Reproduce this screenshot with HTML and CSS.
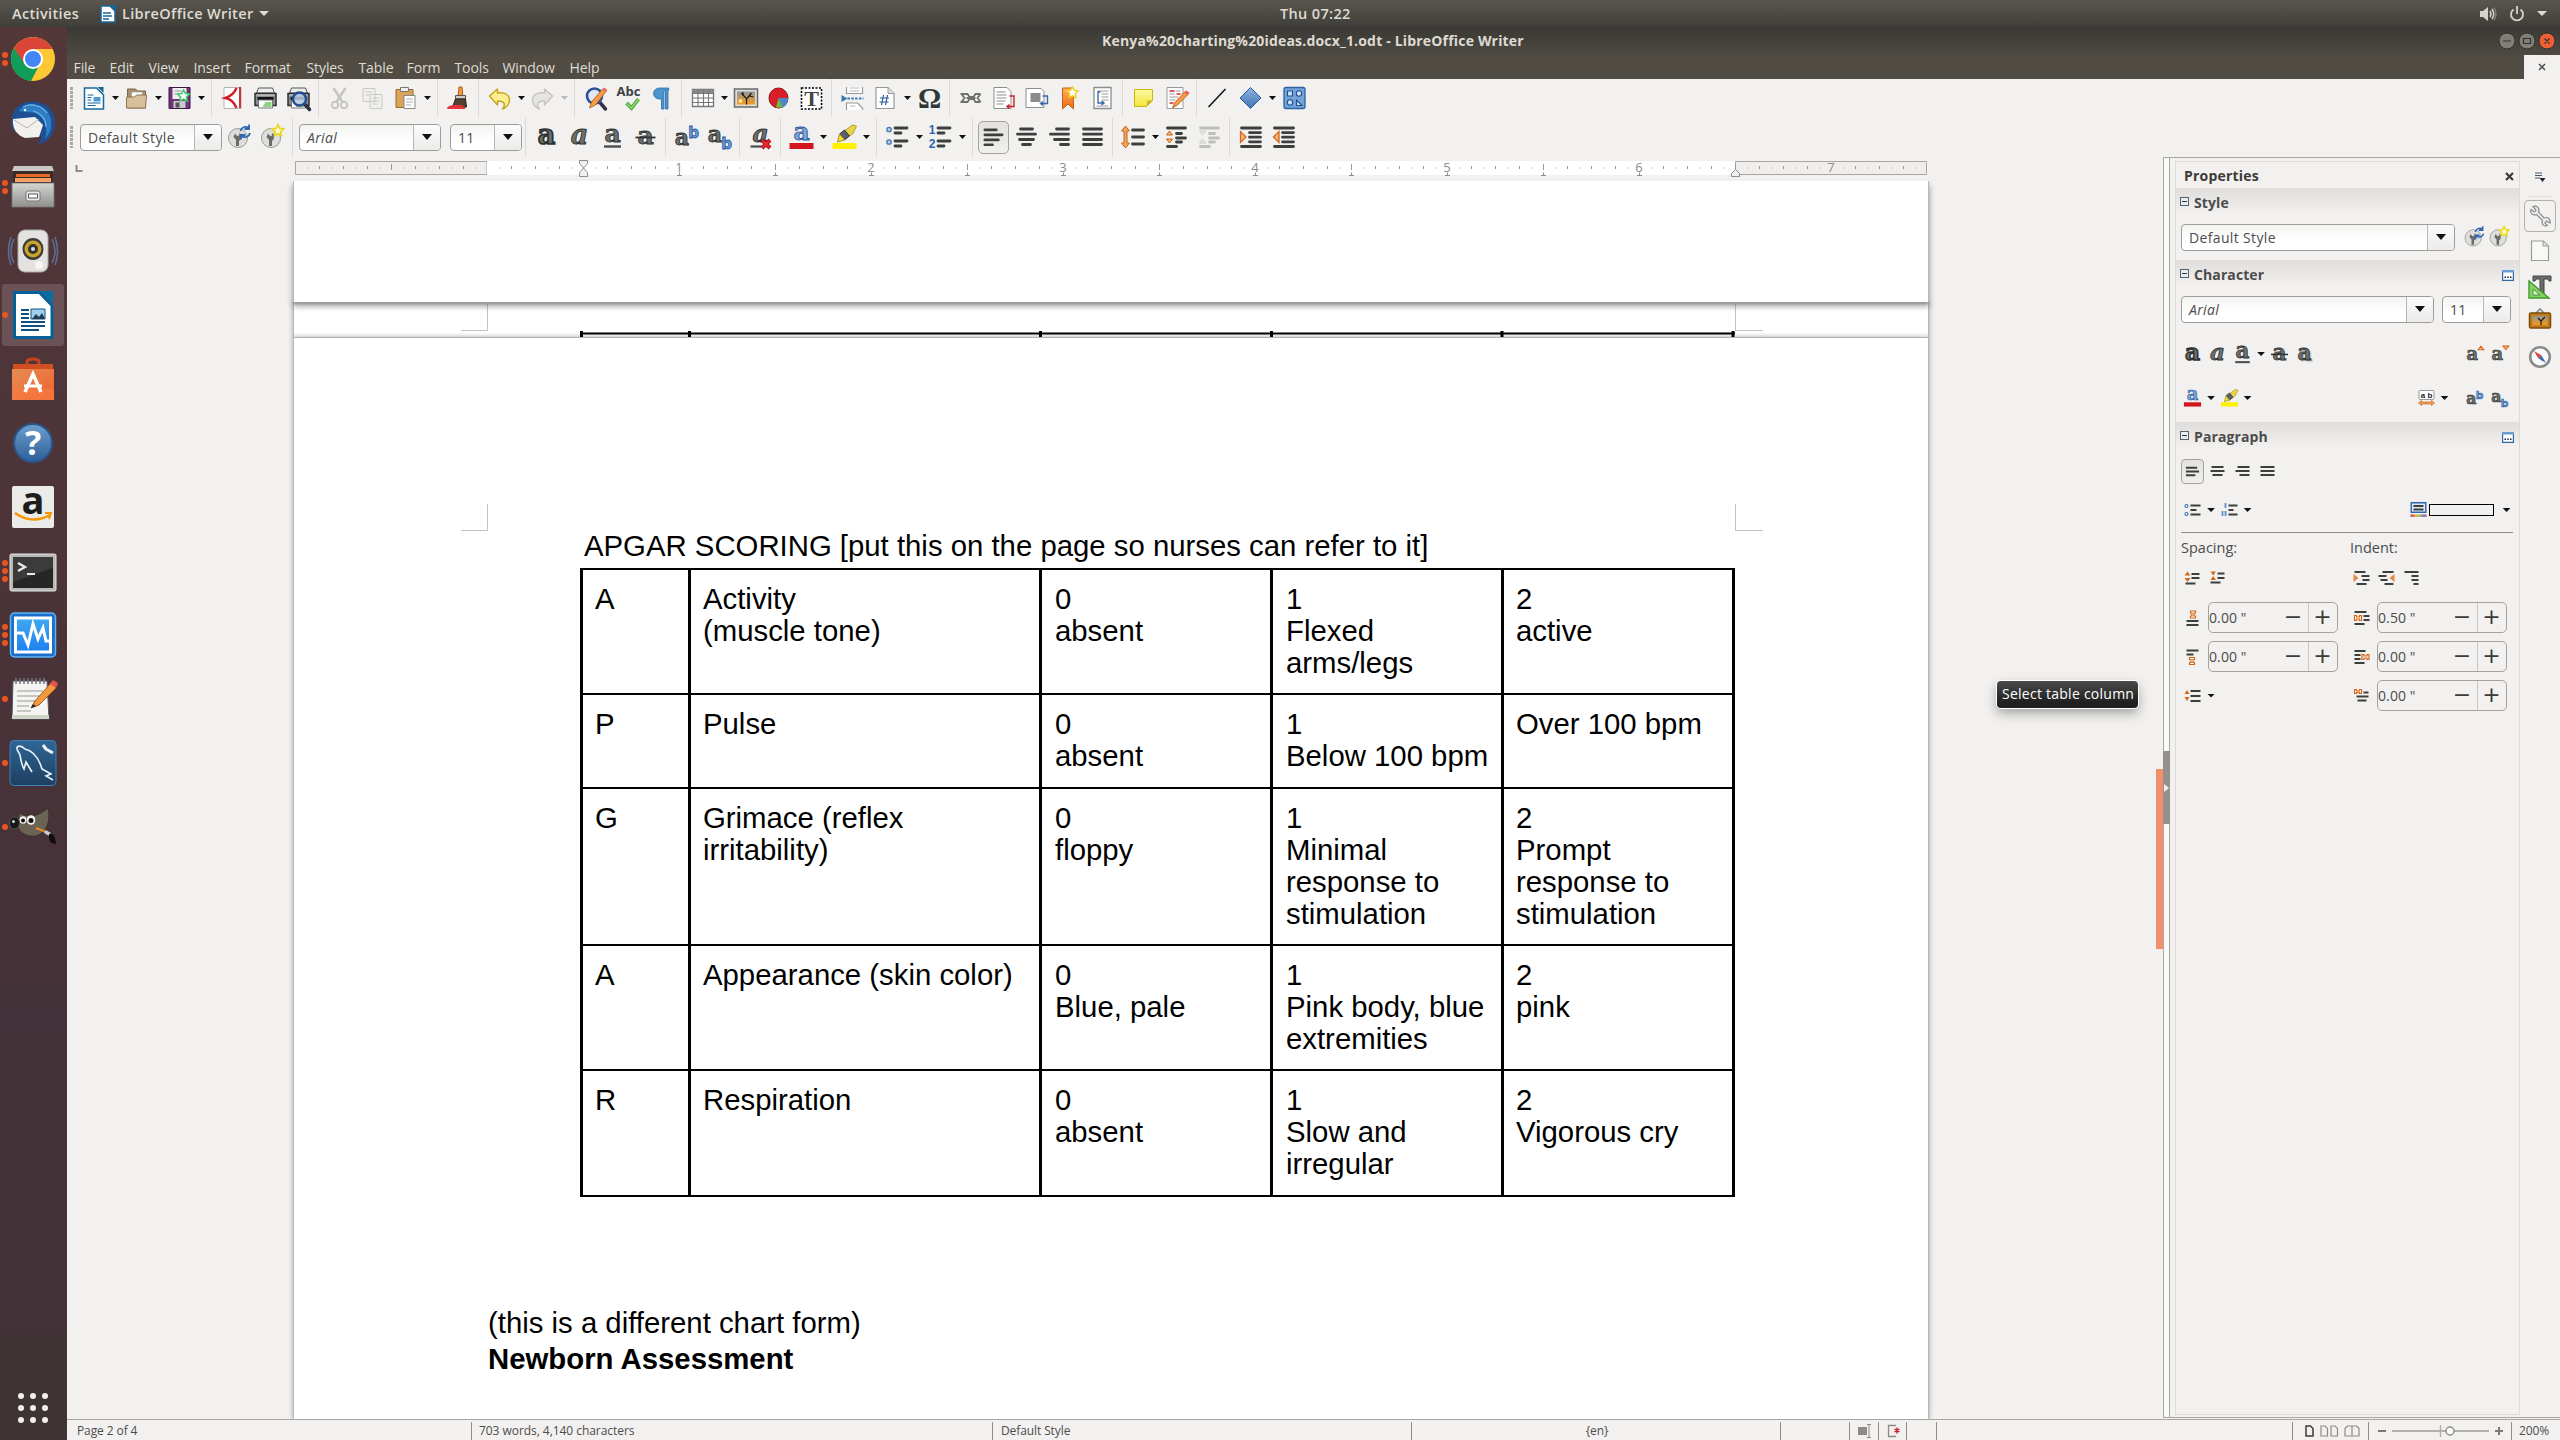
FILE: index.html
```html
<!DOCTYPE html>
<html lang="en">
<head>
<meta charset="utf-8">
<title>Kenya%20charting%20ideas.docx_1.odt - LibreOffice Writer</title>
<link rel="stylesheet" href="styles.css">
</head>
<body>
<svg class="paints" width="0" height="0" aria-hidden="true">
  <defs>
    <linearGradient id="gBlue" x1="0" y1="0" x2="0" y2="1"><stop offset="0" stop-color="#8db5e2"/><stop offset="1" stop-color="#3f74b5"/></linearGradient>
    <linearGradient id="gYel" x1="0" y1="0" x2="0" y2="1"><stop offset="0" stop-color="#fdf8a0"/><stop offset="1" stop-color="#f2e63c"/></linearGradient>
    <linearGradient id="gOr" x1="0" y1="0" x2="0" y2="1"><stop offset="0" stop-color="#ffb060"/><stop offset="1" stop-color="#e96a10"/></linearGradient>
    <linearGradient id="gGrey" x1="0" y1="0" x2="0" y2="1"><stop offset="0" stop-color="#d5d5d3"/><stop offset="1" stop-color="#8f8f8d"/></linearGradient>
    <linearGradient id="gSun" x1="0" y1="0" x2="0" y2="1"><stop offset="0" stop-color="#8d98a0"/><stop offset="1" stop-color="#f59a1c"/></linearGradient>
    <linearGradient id="gHelp" x1="0" y1="0" x2="0" y2="1"><stop offset="0" stop-color="#6f9fce"/><stop offset="1" stop-color="#2c5f99"/></linearGradient>
    <linearGradient id="gBag" x1="0" y1="0" x2="1" y2="1"><stop offset="0" stop-color="#e58d55"/><stop offset="1" stop-color="#f0622d"/></linearGradient>
    <linearGradient id="gMon" x1="0" y1="0" x2="0" y2="1"><stop offset="0" stop-color="#3fa9f0"/><stop offset="1" stop-color="#1f7ff0"/></linearGradient>
    <linearGradient id="gSql" x1="0" y1="0" x2="0" y2="1"><stop offset="0" stop-color="#2f6695"/><stop offset="1" stop-color="#1d3f60"/></linearGradient>
    <pattern id="ticks" x="295" y="157" width="192" height="24" patternUnits="userSpaceOnUse">
      <path fill="#9a9896" d="M12 10.500h1v1h-1zM36 10.500h1v1h-1zM60 10.500h1v1h-1zM84 10.500h1v1h-1zM108 10.500h1v1h-1zM132 10.500h1v1h-1zM156 10.500h1v1h-1zM180 10.500h1v1h-1zM24 9h1v3h-1zM48 9h1v3h-1zM72 9h1v3h-1zM120 9h1v3h-1zM144 9h1v3h-1zM168 9h1v3h-1zM96 7h1v6h-1z"/>
    </pattern>
  </defs>
</svg>
<svg class="sprite" aria-hidden="true">
  <symbol id="new" viewBox="0 0 28 28"><path d="M5 4h12l7 7v14H5z" fill="#fff" stroke="#17679c" stroke-width="1.500"/><path d="M18 3h6v6z" fill="#17679c"/><path d="M8 11h6M8 13.500h4M8 16h4M8 19h13M8 21.500h8" stroke="#17679c" stroke-width="1.200"/><path d="M14 13h7v4.500h-7z" fill="#4a9ad4"/></symbol>
  <symbol id="open" viewBox="0 0 28 28"><path d="M5 5h8l2 2h8v17H5z" fill="#a98f6c" stroke="#7b6548"/><path d="M9 8h11v8H9z" fill="#fff" stroke="#999" stroke-width=".7"/><path d="M4 13h8l2-2h10l-1 13H4z" fill="#d9c09a" stroke="#8d7452"/></symbol>
  <symbol id="save" viewBox="0 0 28 28"><path d="M3.500 3.500h21v21h-21z" fill="#72347c" stroke="#3f1747"/><path d="M7 4h14v11H7z" fill="#eee"/><path d="M9 7h7M9 10h6" stroke="#999"/><path d="M8 17h12v7H8z" fill="#c9c9c9"/><path d="M10 18.500h4v5h-4z" fill="#555"/><path d="M18 6l2 3.500 4 .6-3 2.800.8 4.100-3.800-1.800-3.600 1.800.7-4.100-3-2.800 4.100-.6z" fill="#fff" stroke="#3ec96a" stroke-width="1.500"/></symbol>
  <symbol id="pdf" viewBox="0 0 28 28"><path d="M5.500 3.500h17v21h-17z" fill="#fff" stroke="#b5b5b3"/><path d="M18 4c-2 5-5 8-11 10 5 1 9 5 11 10" fill="none" stroke="#d01c22" stroke-width="2.400"/><path d="M21.500 3v21" stroke="#d01c22" stroke-width="1.800"/></symbol>
  <symbol id="print" viewBox="0 0 28 28"><path d="M7 4h14l2 5H5z" fill="#eee" stroke="#555"/><path d="M3.500 9.500h21v12h-21z" fill="#8b8e90" stroke="#2b2d2e" stroke-width="1.500"/><path d="M6 13h16v3H6z" fill="#111"/><path d="M7 16h14v8H7z" fill="#fff" stroke="#777"/><path d="M14 18h6v5h-9z" fill="#8ed37e"/><path d="M5 11h18" stroke="#ddd"/></symbol>
  <symbol id="lens" viewBox="0 0 28 28"><path d="M20 20l5 5.500" stroke="#2a3340" stroke-width="3.500" stroke-linecap="round"/><circle cx="15" cy="15" r="6.500" fill="#b7cbe6" fill-opacity=".85" stroke="#274a94" stroke-width="2.400"/></symbol>
  <symbol id="preview" viewBox="0 0 28 28"><use href="#print"/><use href="#lens"/></symbol>
  <symbol id="cut" viewBox="0 0 28 28"><g fill="none" stroke="#c6c5c3" stroke-width="2"><path d="M8 4l9 14M20 4l-9 14" stroke-width="2.500"/><circle cx="9.500" cy="21" r="3.200"/><circle cx="18.500" cy="21" r="3.200"/></g></symbol>
  <symbol id="copy" viewBox="0 0 28 28"><g fill="#f0efed" stroke="#cbcac8"><path d="M4.500 4.500h12v13h-12zM11.500 10.500h12v14h-12z"/><path d="M7 8h7M7 11h4M14 14h7M14 17h7M14 20h5"/></g></symbol>
  <symbol id="paste" viewBox="0 0 28 28"><path d="M4.500 5.500h17v18h-17z" fill="#d9a45a" stroke="#9b6a2a"/><path d="M9 3.500h8v4H9z" fill="#eee" stroke="#777"/><path d="M12.500 11.500h11v13h-11z" fill="#fff" stroke="#888"/><path d="M14.500 15h7M14.500 18h7M14.500 21h5" stroke="#aaa"/></symbol>
  <symbol id="brush" viewBox="0 0 28 28"><path d="M14.500 3h3l.8 9h-4.600z" fill="#f39a3d" stroke="#b35c11"/><path d="M11 11.500h10v3.500H11z" fill="#cfcfcd" stroke="#555"/><path d="M11 15h10l1 8H8z" fill="#55402f" stroke="#2c1d14"/><path d="M2 24c4-4 9-3 16-3l3 4H4z" fill="#e0303a"/></symbol>
  <symbol id="undo" viewBox="0 0 28 28"><path d="M4 12l8-7v4c8-1 12 2 12 7 0 4-2 7-7 9 3-4 3-8-5-8v4z" fill="#fcee8e" stroke="#c9a31a" stroke-width="1.400" stroke-linejoin="round"/></symbol>
  <symbol id="redo" viewBox="0 0 28 28"><path d="M24 12l-8-7v4c-8-1-12 2-12 7 0 4 2 7 7 9-3-4-3-8 5-8v4z" fill="#e6e5e3" stroke="#c5c4c2" stroke-width="1.400" stroke-linejoin="round"/></symbol>
  <symbol id="find" viewBox="0 0 28 28"><path d="M18 18l6 7" stroke="#334" stroke-width="3.500" stroke-linecap="round"/><circle cx="13" cy="12" r="7.500" fill="#dfe8f4" stroke="#2b4f9c" stroke-width="2.600"/><path d="M8 24l2-6L21 5l3.500 2.500L14 21z" fill="#f59a45" stroke="#b6590f" stroke-width=".8"/><path d="M21 5l1.500-1.500 3.500 2.500-1.500 1.800z" fill="#e66"/></symbol>
  <symbol id="spell" viewBox="0 0 28 28"><text x="14" y="12" text-anchor="middle" class="glyph-sans">Abc</text><path d="M12 19l5 5 7-9" fill="none" stroke="#3e9a2f" stroke-width="3.600"/><path d="M12 19l5 5 7-9" fill="none" stroke="#8ee36f" stroke-width="1.500"/></symbol>
  <symbol id="pilcrow" viewBox="0 0 28 28"><path d="M21 4h-9a6 5.500 0 0 0 0 11h2v10h2.500V6.500H18V25h2.500V6h1z" fill="#4d94cf" stroke="#2d6da8" stroke-width=".8"/></symbol>
  <symbol id="table" viewBox="0 0 28 28"><path d="M4 5.500h21v17H4z" fill="#fff" stroke="#777" stroke-width="1.300"/><path d="M4 5.500h21v4H4z" fill="#8a8a88"/><path d="M9.500 6v17M15 6v17M20 6v17M4 9.500h21M4 14h21M4 18.500h21" stroke="#777" stroke-width="1.100"/></symbol>
  <symbol id="image" viewBox="0 0 28 28"><path d="M3 5h23v18H3z" fill="#ddd" stroke="#6a6a68" stroke-width="1.500"/><path d="M5.500 7.500h18v13h-18z" fill="url(#gSun)"/><path d="M15 20.500v-6l-5-5M15 15l5-6M12 11l-1-3M18 12l4 1" stroke="#251a10" stroke-width="1.200" fill="none"/><circle cx="9" cy="17" r="2" fill="#ffe98a"/></symbol>
  <symbol id="chart" viewBox="0 0 28 28"><ellipse cx="14" cy="14" rx="9.500" ry="10" fill="#d81f27" stroke="#9a1116"/><path d="M14 14h9.500c0 5-2 8-5 9.500z" fill="#4d86c6"/><path d="M14 14l4.500 9.500h-7z" fill="#62c14a"/></symbol>
  <symbol id="textbox" viewBox="0 0 28 28"><path d="M4 4h20v21H4z" fill="#fff" stroke="#000" stroke-width="1.600" stroke-dasharray="2 1.500"/><text x="14" y="22" text-anchor="middle" class="glyph-t">T</text></symbol>
  <symbol id="pagebreak" viewBox="0 0 28 28"><path d="M8 3v6.500h16V3M8 26v-7h11l5 5v2" fill="#fff" stroke="#999" stroke-width="1.200"/><path d="M11 4h10M11 7h10M11 22h6" stroke="#bbb"/><path d="M3 11l6 3.500L3 18z" fill="#3c74b8"/><path d="M9 14.500h16" stroke="#3c74b8" stroke-width="2" stroke-dasharray="2.500 1.300"/></symbol>
  <symbol id="field" viewBox="0 0 28 28"><path d="M4.500 3.500h12l6 6v15h-18z" fill="#fff" stroke="#999" stroke-width="1.200"/><path d="M16.500 3.500v6h6" fill="#ddd" stroke="#999"/><path d="M12 11l-2 10M16 11l-2 10M8.500 14h9M8 18h9" stroke="#2c5a9c" stroke-width="1.200"/></symbol>
  <symbol id="omega" viewBox="0 0 28 28"><text x="14" y="24" text-anchor="middle" class="glyph-omega">Ω</text></symbol>
  <symbol id="link" viewBox="0 0 28 28"><g fill="none" stroke="#6f716f" stroke-width="1.800"><path d="M4 10h7l2 3h4l2-3h5M4 18h7l2-3h4l2 3h5M5 10l3 4-3 4M24 10l-3 4 3 4M10 14h9"/></g></symbol>
  <symbol id="footnote" viewBox="0 0 28 28"><path d="M4.500 3.500h13l4 4v17h-17z" fill="#fff" stroke="#8d8d8b"/><path d="M7 8h9M7 11h10M7 14h10M7 17h9M7 20h7" stroke="#8d8d8b"/><path d="M20 12h4.500v10.500h-6M20 20.500l-2.500 2 2.500 2" fill="none" stroke="#c8202a" stroke-width="1.400"/></symbol>
  <symbol id="endnote" viewBox="0 0 28 28"><path d="M3.500 4.500h15l3 3v16h-18z" fill="#fff" stroke="#8d8d8b"/><path d="M8 9h10v9H8z" fill="#8b8d8a"/><path d="M20 12h5v7.500h-6M20.500 17.500l-2.500 2 2.500 2" fill="none" stroke="#386aa8" stroke-width="1.400"/></symbol>
  <symbol id="bookmark" viewBox="0 0 28 28"><path d="M7 4h11v21l-5.500-5L7 25z" fill="url(#gOr)" stroke="#c9600c"/><path d="M17 3l1.800 3.300 3.700.6-2.700 2.700.6 3.800-3.400-1.700-3.400 1.700.6-3.800-2.700-2.700 3.700-.6z" fill="#fff" stroke="#f2d21d" stroke-width="1.400"/></symbol>
  <symbol id="crossref" viewBox="0 0 28 28"><path d="M5.500 3.500h17v21h-17z" fill="#fff" stroke="#8d8d8b" stroke-width="1.300"/><path d="M9 7h11M13 10h7M13 13h7M13 16h7M8 22h12" stroke="#9a9a98" stroke-width="1.200"/><path d="M12 8H9.500v11H15M13 17l2.500 2-2.500 2" fill="none" stroke="#386aa8" stroke-width="1.400"/></symbol>
  <symbol id="comment" viewBox="0 0 28 28"><path d="M5 5.500h18v11l-6 6H5z" fill="url(#gYel)" stroke="#c9b814"/><path d="M17 22.500l1-6 5 0z" fill="#c9b814"/></symbol>
  <symbol id="track" viewBox="0 0 28 28"><path d="M4.500 3.500h16v21h-16z" fill="#fff" stroke="#999"/><path d="M7 7h5M14 10h4M7 19h4" stroke="#d22" stroke-width="1.700"/><path d="M13 7h5M7 10h5M7 13h9M7 16h6" stroke="#999"/><path d="M10 24l2-5L22 8l3.500 2.500L15 21z" fill="#f59a45" stroke="#a85a1a" stroke-width=".8"/><path d="M22 8l2-1.500 3 2.500-1.500 1.500z" fill="#e55"/></symbol>
  <symbol id="line" viewBox="0 0 28 28"><path d="M5 23L22 5" stroke="#111" stroke-width="1.500"/></symbol>
  <symbol id="diamond" viewBox="0 0 28 28"><path d="M14 3.500L24.500 14 14 24.500 3.500 14z" fill="url(#gBlue)" stroke="#2c5a9c"/></symbol>
  <symbol id="draw" viewBox="0 0 28 28"><rect x="3.500" y="3.500" width="21" height="21" rx="2" fill="#74a3da" stroke="#2f62a5" stroke-width="1.300"/><g fill="#cfe0f4" stroke="#1f4f93" stroke-width="1.100"><path d="M7 7h5v5H7z"/><circle cx="18.500" cy="9.500" r="2.700"/><circle cx="9.500" cy="18.500" r="2.700"/><path d="M16 16v5.500h5.500z"/></g></symbol>

  <symbol id="refresh" viewBox="0 0 28 28"><circle cx="12.500" cy="15" r="9.500" fill="#dededc" stroke="#9b9b99"/><path d="M10.500 23v-6L8 14l1.500-3.500 2 2.500 2-.5.500-3 2 3-1 4-1.500 1.500V23z" fill="#6a6c6a"/><path d="M15 8a5 5 0 0 1 8-3M24.500 10a5 5 0 0 1-8 3M23.500 1.500v4.500H19M15.500 16.500V12H20" fill="none" stroke="#2f65b0" stroke-width="1.800"/></symbol>
  <symbol id="newstyle" viewBox="0 0 28 28"><circle cx="12.500" cy="15" r="9.500" fill="#dededc" stroke="#9b9b99"/><path d="M10.500 23v-6L8 14l1.500-3.500 2 2.500 2-.5.500-3 2 3-1 4-1.500 1.500V23z" fill="#6a6c6a"/><path d="M19.500 2l1.800 3.300 3.700.6-2.700 2.700.6 3.800-3.400-1.700-3.400 1.700.6-3.800-2.700-2.700 3.700-.6z" fill="#fffbd0" stroke="#ecd81e" stroke-width="1.800"/></symbol>
  <symbol id="bold" viewBox="0 0 28 28"><text x="14" y="21" text-anchor="middle" class="glyph-a glyph-heavy">a</text></symbol>
  <symbol id="italic" viewBox="0 0 28 28"><text x="14" y="21" text-anchor="middle" class="glyph-a glyph-slant">a</text></symbol>
  <symbol id="under" viewBox="0 0 28 28"><text x="14" y="19" text-anchor="middle" class="glyph-a glyph-md">a</text><path d="M5.500 23.500h17" stroke="#4a4e4c" stroke-width="2.400"/></symbol>
  <symbol id="strike" viewBox="0 0 28 28"><text x="14" y="21" text-anchor="middle" class="glyph-a glyph-md">a</text><path d="M4 14.500h20" stroke="#2e3230" stroke-width="1.800"/></symbol>
  <symbol id="shadow" viewBox="0 0 28 28"><text x="15.500" y="22.500" text-anchor="middle" class="glyph-a glyph-md glyph-soft">a</text><text x="14" y="21" text-anchor="middle" class="glyph-a glyph-md">a</text></symbol>
  <symbol id="super" viewBox="0 0 28 28"><text x="9.500" y="22" text-anchor="middle" class="glyph-a glyph-sm">a</text><text x="21" y="15" text-anchor="middle" class="glyph-b">b</text></symbol>
  <symbol id="sub" viewBox="0 0 28 28"><text x="9.500" y="19" text-anchor="middle" class="glyph-a glyph-sm">a</text><text x="21" y="26" text-anchor="middle" class="glyph-b">b</text></symbol>
  <symbol id="grow" viewBox="0 0 28 28"><text x="11" y="22" text-anchor="middle" class="glyph-a glyph-md">a</text><path d="M19 8l4-5 4 5z" fill="#f9c48e" stroke="#d4691a" stroke-width="1.500"/></symbol>
  <symbol id="shrink" viewBox="0 0 28 28"><text x="11" y="22" text-anchor="middle" class="glyph-a glyph-md">a</text><path d="M19 3l4 5 4-5z" fill="#f9c48e" stroke="#d4691a" stroke-width="1.500"/></symbol>
  <symbol id="clear" viewBox="0 0 28 28"><text x="14" y="19" text-anchor="middle" class="glyph-a glyph-md glyph-slant">a</text><path d="M4 23.500h11" stroke="#4a4e4c" stroke-width="2.200"/><path d="M15.500 17l8 8M23.500 17l-8 8" stroke="#a30d12" stroke-width="4"/><path d="M16 17.500l7 7M23 17.500l-7 7" stroke="#ee2b30" stroke-width="2.200"/></symbol>
  <symbol id="fcolor" viewBox="0 0 28 28"><text x="14" y="17" text-anchor="middle" class="glyph-a glyph-md glyph-blue">a</text><path d="M2 20h24v6H2z" fill="#d3161d"/></symbol>
  <symbol id="hilite" viewBox="0 0 28 28"><path d="M14 8l8-6 4 1-4 8-5 3z" fill="#e8d34a" stroke="#b59c1a"/><path d="M9 11l5-4 5 6-5 4z" fill="#5a5e66" stroke="#33363a"/><path d="M9 11l5 6-7 2z" fill="#f0dc3c" stroke="#a8931a"/><path d="M2 20h24v6H2z" fill="#fdf000"/></symbol>
  <symbol id="bullets" viewBox="0 0 28 28"><g fill="#bcd0ea" stroke="#4474b4" stroke-width="1.300"><circle cx="5.500" cy="6.500" r="2.200"/><circle cx="5.500" cy="19" r="2.200"/></g><path d="M11.500 5h12M11.500 10h6M11.500 18h12M11.500 23h6" class="bar"/></symbol>
  <symbol id="numbers" viewBox="0 0 28 28"><text x="5.500" y="11" text-anchor="middle" class="glyph-n">1</text><text x="5.500" y="25" text-anchor="middle" class="glyph-n">2</text><path d="M11.500 5h12M11.500 10h6M11.500 18h12M11.500 23h6" class="bar"/></symbol>
  <symbol id="al" viewBox="0 0 28 28"><path d="M5 6h12M5 11.200h18M5 16.500h14M5 21.500h8" class="bar"/></symbol>
  <symbol id="ac" viewBox="0 0 28 28"><path d="M8 6h12M5 11.200h18M7 16.500h14M10 21.500h8" class="bar"/></symbol>
  <symbol id="ar" viewBox="0 0 28 28"><path d="M11 6h12M5 11.200h18M9 16.500h14M15 21.500h8" class="bar"/></symbol>
  <symbol id="aj" viewBox="0 0 28 28"><path d="M5 6h18M5 11.200h18M5 16.500h18M5 21.500h18" class="bar"/></symbol>
  <symbol id="spacing" viewBox="0 0 28 28"><path d="M2 8l4-5 4 5H7.500v12H10l-4 5-4-5h2.500V8z" fill="#f0a45e" stroke="#c4661a"/><path d="M13 7h11M13 14h11M13 21h11" class="bar"/></symbol>
  <symbol id="pinc" viewBox="0 0 28 28"><path d="M5 5h18M14 10.500h5M14 15h9M5 23.500h9M14 19h5" class="bar"/><path d="M4 12l3-4 3 4zM4 16l3 4 3-4z" fill="#f7b57c" stroke="#c4661a"/></symbol>
  <symbol id="pdec" viewBox="0 0 28 28"><g opacity=".28"><path d="M5 5h18M14 10.500h5M14 15h9M5 23.500h9M14 19h5" class="bar"/><path d="M4 8l3 4 3-4zM4 20l3-4 3 4z" fill="#ccc" stroke="#777"/></g></symbol>
  <symbol id="iinc" viewBox="0 0 28 28"><path d="M5 5h19M13 9.600h11M13 14.200h11M13 18.800h11M5 23.500h19" class="bar"/><path d="M4 8.500v11l5.500-5.500z" fill="#f7b57c" stroke="#d4691a" stroke-width="1.300"/></symbol>
  <symbol id="idec" viewBox="0 0 28 28"><path d="M5 5h19M13 9.600h11M13 14.200h11M13 18.800h11M5 23.500h19" class="bar"/><path d="M9.500 8.500v11L4 14z" fill="#f7b57c" stroke="#d4691a" stroke-width="1.300"/></symbol>

  <symbol id="sal" viewBox="0 0 16 16"><path d="M1 4h12M1 8h14M1 12h10" class="bar thin"/></symbol>
  <symbol id="sac" viewBox="0 0 16 16"><path d="M2 4h12M1 8h14M3 12h10" class="bar thin"/></symbol>
  <symbol id="sar" viewBox="0 0 16 16"><path d="M3 4h12M1 8h14M5 12h10" class="bar thin"/></symbol>
  <symbol id="saj" viewBox="0 0 16 16"><path d="M1 4h14M1 8h14M1 12h14" class="bar thin"/></symbol>
  <symbol id="sbul" viewBox="0 0 16 16"><g fill="none" stroke="#4474b4" stroke-width="1.200"><circle cx="2" cy="4" r="1.500"/><circle cx="2" cy="12" r="1.500"/></g><path d="M6 3.500h10M6 8h6M6 12.500h10" class="bar thin"/></symbol>
  <symbol id="snum" viewBox="0 0 16 16"><path d="M4 1v5M1 9v5M4 9v5" stroke="#5b8ecb" stroke-width="1.800"/><path d="M7 3.500h9M7 8h5M7 12.500h9" class="bar thin"/></symbol>
  <symbol id="sinc" viewBox="0 0 16 16"><path d="M7 4h8M7 8h8M1 13.500h10" class="bar thin"/><path d="M0 5.500l3-4 3 4zM0 8l3 4 3-4z" fill="#d4691a"/></symbol>
  <symbol id="sdec" viewBox="0 0 16 16"><path d="M8 3.500h7M8 8h7M1 12.500h10" class="bar thin"/><path d="M1 1.500l2.700 4 2.700-4zM1 10l2.700-4 2.700 4z" fill="#d4691a"/></symbol>
  <symbol id="siin" viewBox="0 0 16 16"><path d="M1 2h11M8 6h8M9 10h7M3 14h10" class="bar thin"/><path d="M0 4v8l5-4z" fill="#e58a3c"/></symbol>
  <symbol id="side" viewBox="0 0 16 16"><path d="M4 2h11M0 6h8M2 10h7M6 14h9" class="bar thin"/><path d="M16 4v8l-5-4z" fill="#e58a3c"/></symbol>
  <symbol id="shang" viewBox="0 0 16 16"><path d="M1 2h14M8 6h7M8 10h7M10 14h5" class="bar thin"/></symbol>
  <symbol id="sabove" viewBox="0 0 16 16"><path d="M2 11h12M2 15h12" class="bar thin"/><path d="M6 1h5v2H9.500v3H11v2H6V6h1.500V3H6z" fill="#fff" stroke="#d4691a" stroke-width="1.200"/></symbol>
  <symbol id="sbelow" viewBox="0 0 16 16"><path d="M2 1.500h12M2 5.500h7" class="bar thin"/><path d="M5 8.500h5v2H8.500v3H10v2H5v-2h1.500v-3H5z" fill="#fff" stroke="#d4691a" stroke-width="1.200"/></symbol>
  <symbol id="sleft" viewBox="0 0 16 16"><path d="M1 2h12M10 6h6M10 10h6M1 14h10" class="bar thin"/><path d="M1 5.500h2V7h3V5.500h2v5H6V9H3v1.500H1z" fill="#fff" stroke="#d4691a" stroke-width="1.200"/></symbol>
  <symbol id="sright" viewBox="0 0 16 16"><path d="M1 2h11M1 6h6M1 10h6M1 14h10" class="bar thin"/><path d="M8.500 5.500h2V7h3V5.500h2v5h-2V9h-3v1.500h-2z" fill="#fff" stroke="#d4691a" stroke-width="1.200"/></symbol>
  <symbol id="sfirst" viewBox="0 0 16 16"><path d="M10 4.500h5M3 8.500h12M4 12.500h9" class="bar thin"/><path d="M1 1.500h2V3h3V1.500h2v4H6V4.500H3v1H1z" fill="#fff" stroke="#d4691a" stroke-width="1.200"/></symbol>
  <symbol id="sline" viewBox="0 0 16 16"><path d="M6 3h10M6 8h10M6 13h10" class="bar thin"/><path d="M0 6l2.500-4 2.500 4zM0 9l2.500 4 2.500-4z" fill="#d4691a"/></symbol>
  <symbol id="skern" viewBox="0 0 16 16"><rect x=".5" y=".5" width="15" height="9" rx="1" fill="#fff" stroke="#999"/><text x="8" y="8" text-anchor="middle" class="glyph-ab">a b</text><path d="M0 13l3-2.500V12h10v-1.500l3 2.500-3 2.500V14H3v1.500z" fill="#f0a45e" stroke="#c4661a" stroke-width=".7"/></symbol>
  <symbol id="sback" viewBox="0 0 16 16"><path d="M.7.700h14.600v9.600H.7z" fill="#dfe9f5" stroke="#2f65b0" stroke-width="1.400"/><path d="M3 4h10M3 7.500h10" class="bar thin"/><path d="M0 12.500h16v2.500H0z" fill="#e3b04a"/><path d="M0 12.500h4v2.500H0z" fill="#d9606a"/><path d="M7 12.500h4v2.500H7z" fill="#8bcf7a"/><path d="M11 12.500h5v2.500h-5z" fill="#a56fc0"/></symbol>
  <symbol id="more" viewBox="0 0 12 12"><path d="M.6.600h10.800v9.800H.6z" fill="#fff" stroke="#3465a4" stroke-width="1.200"/><path d="M0 0h12v2.500H0z" fill="#6c9bd4"/><path d="M2.500 6.500h1.500v1.500H2.500zM5.200 6.500h1.500v1.500H5.200zM8 6.500h1.500v1.500H8z" fill="#223"/></symbol>
</svg>

<header class="topbar">
  <div class="topbar-left"><span class="activities">Activities</span>
    <svg width="16" height="18" viewBox="0 0 16 18"><path d="M1 1h9l5 5v11H1z" fill="#fff" stroke="#17679c" stroke-width="1.500"/><path d="M10 0h6v6z" fill="#17679c"/><path d="M3 8h8M3 11h9M3 14h6" stroke="#17679c" stroke-width="1.300"/></svg>
    <span class="appname">LibreOffice Writer</span><i class="caret"></i></div>
  <div class="clock">Thu 07:22</div>
  <div class="topbar-right">
    <svg width="18" height="16" viewBox="0 0 18 16"><path d="M1 5h3l5-4v14l-5-4H1z" fill="#d4d2cd"/><path d="M11 5q2 3 0 6M13 3q3.500 5 0 10" fill="none" stroke="#d4d2cd" stroke-width="1.500"/><path d="M15 1.500q4 6.500 0 13" fill="none" stroke="#85827b" stroke-width="1.300"/></svg>
    <svg width="16" height="16" viewBox="0 0 16 16"><path d="M4.500 3.500a6 6 0 1 0 7 0M8 0v8" fill="none" stroke="#d4d2cd" stroke-width="1.800"/></svg>
    <i class="caret"></i>
  </div>
</header>

<div class="desktop">
  <nav class="dock">
    <div class="launcher"><div class="dots"><i></i><i></i></div>
      <svg width="48" height="48" viewBox="0 0 48 48"><circle cx="24" cy="24" r="22" fill="#fcc934"/><path d="M5 13a22 22 0 0 0 17 33l9-17-14-1z" fill="#0f9d58"/><path d="M24 14h19.500A22 22 0 0 0 5 13l10 15z" fill="#db4437"/><circle cx="24" cy="24" r="10" fill="#fff"/><circle cx="24" cy="24" r="8" fill="#4285f4"/></svg></div>
    <div class="launcher">
      <svg width="48" height="48" viewBox="0 0 48 48"><path d="M4 14C8 4 22 0 32 4c12 4 16 16 13 26-2 8-8 14-16 15 2-3 3-5 3-8L6 32C1 26 2 20 4 14z" fill="#1c4f95"/><path d="M10 12C16 3 30 3 38 12c6 8 6 20-2 28 3-10 1-20-8-25-6-3-12-1-18-3z" fill="#2f7dc4"/><path d="M14 8c8-4 18-2 24 6M24 12c8 2 13 8 13 16" fill="none" stroke="#6db7ea" stroke-width="1.200"/><path d="M4 20l22-2 8 8-4 12-14 1C8 36 3 30 4 20z" fill="#f3f1ee"/><path d="M5 21l13 8 12-9" fill="none" stroke="#b5b2ae"/><circle cx="16" cy="11" r="1.200" fill="#fff"/></svg></div>
    <div class="launcher"><div class="dots"><i></i><i></i></div>
      <svg width="48" height="48" viewBox="0 0 48 48"><path d="M5 3h38l2 5H3z" fill="#c9c9c7"/><path d="M4 8h40v16H4z" fill="#3a2d28"/><path d="M7 11h34v3H7z" fill="#e8682a"/><path d="M6 15h36v4H6z" fill="#f7a264"/><path d="M3 20h42v24H3z" fill="url(#gGrey)" stroke="#777" stroke-width=".8"/><rect x="17" y="28" width="14" height="10" rx="2" fill="#e8e8e6" stroke="#777"/><path d="M19.500 31h9v4h-9z" fill="#fff" stroke="#555"/></svg></div>
    <div class="launcher">
      <svg width="48" height="48" viewBox="0 0 48 48"><path d="M5 12q-6 12 0 24M43 12q6 12 0 24M2 10q-5 14 0 28M46 10q5 14 0 28" fill="none" stroke="#5f6f94" stroke-width="1.500"/><rect x="9" y="3" width="30" height="42" rx="7" fill="#e3e2e0" stroke="#aaa"/><ellipse cx="24" cy="22" rx="10.500" ry="11" fill="#3a3a3c"/><circle cx="24" cy="22" r="8.500" fill="#c9a22a"/><circle cx="24" cy="22" r="5" fill="#333"/><circle cx="24" cy="22" r="2" fill="#ddd"/><circle cx="30" cy="38" r="4" fill="#f6f6f4"/></svg></div>
    <div class="launcher active"><div class="dots"><i></i></div>
      <svg width="48" height="48" viewBox="0 0 48 48"><path d="M5.500 1.500h25l12.500 13v32H5.500z" fill="#fff" stroke="#06619a" stroke-width="3"/><path d="M31 0h13v13z" fill="#0b6da6"/><path d="M12 19h8M12 23h8M12 27h8M12 31h24M12 35h24M12 39h18" stroke="#0c5284" stroke-width="2"/><path d="M22 18h14v10H22z" fill="#9fd0ee" stroke="#0c5284"/><path d="M23 28l4-5 3 3 3-4 3 6z" fill="#223c50"/></svg></div>
    <div class="launcher">
      <svg width="48" height="48" viewBox="0 0 48 48"><path d="M18 12V7q0-3 6-3t6 3v5" fill="none" stroke="#c8441c" stroke-width="3"/><path d="M4 9h40v6H4z" fill="#d14e22"/><path d="M3 14h42v31H3z" fill="url(#gBag)"/><path d="M3 34h42v11H3z" fill="#f97b45" opacity=".6"/><path d="M16 37l8-18 8 18" fill="none" stroke="#fff" stroke-width="3.500"/><path d="M15 31h18" stroke="#fff" stroke-width="3"/></svg></div>
    <div class="launcher">
      <svg width="48" height="48" viewBox="0 0 48 48"><circle cx="24" cy="24" r="19" fill="url(#gHelp)" stroke="#2b558a" stroke-width="2"/><text x="24" y="36" text-anchor="middle" class="glyph-help">?</text></svg></div>
    <div class="launcher">
      <svg width="48" height="48" viewBox="0 0 48 48"><rect x="3" y="3" width="42" height="42" rx="2" fill="#ebebea"/><text x="24" y="31" text-anchor="middle" class="glyph-amz">a</text><path d="M6 30q17 12 35 2" fill="none" stroke="#f79400" stroke-width="2.500"/><path d="M36 30l6 0-2 6" fill="none" stroke="#f79400" stroke-width="2"/></svg></div>
    <div class="launcher"><div class="dots"><i></i><i></i><i></i></div>
      <svg width="48" height="48" viewBox="0 0 48 48"><rect x="1" y="7" width="46" height="37" rx="1.500" fill="#b9b9b7" stroke="#e5e5e3"/><path d="M4 10h40v31H4z" fill="#262626"/><path d="M4 10h40v11L4 35z" fill="#3b3b3b"/><path d="M9 16l7 4-7 4" fill="none" stroke="#e8e8e8" stroke-width="2.400"/><path d="M18 27h8" stroke="#e8e8e8" stroke-width="2"/></svg></div>
    <div class="launcher"><div class="dots"><i></i><i></i><i></i></div>
      <svg width="48" height="48" viewBox="0 0 48 48"><rect x="1.500" y="2" width="45" height="44" rx="4" fill="#1c6fc8" stroke="#5cb4f7" stroke-width="1.500"/><path d="M6.500 7h35v34h-35z" fill="url(#gMon)" stroke="#fff" stroke-width="3"/><path d="M8 22h6l5 12 5-21 5 15 5-11 3 13h4" fill="none" stroke="#fff" stroke-width="3"/></svg></div>
    <div class="launcher"><div class="dots"><i></i></div>
      <svg width="48" height="48" viewBox="0 0 48 48"><path d="M4 6h34l2 38H3z" fill="#f4f4f2" stroke="#556" stroke-width="1"/><path d="M3 40h37v4H3z" fill="#cfd6c4"/><path d="M7 3v6M11 3v6M15 3v6M19 3v6M23 3v6M27 3v6M31 3v6M35 3v6" stroke="#777" stroke-width="1.500"/><path d="M8 16h26M8 21h24M8 26h18M8 31h12M8 36h14" stroke="#b5b5b3" stroke-width="1.300"/><path d="M22 33l4-7L42 8l5 5-17 17z" fill="#f59a3c" stroke="#a85a1a"/><path d="M41 9l3-4 5 3-2 5z" fill="#ea5252"/><path d="M22 33l2-4 3 2z" fill="#222"/></svg></div>
    <div class="launcher"><div class="dots"><i></i></div>
      <svg width="48" height="48" viewBox="0 0 48 48"><rect x="1" y="1.500" width="46" height="45" rx="4" fill="url(#gSql)" stroke="#3f7fb5"/><path d="M8 8c3-2 6 0 8 2 9 2 14 10 17 20l9 5-5 2 7 4M8 8c-1 3 2 5 3 8 1 6 2 11 4 14l2-7 6 10" fill="none" stroke="#e8f0f8" stroke-width="1.600"/><path d="M34 6l3 4 7 4" stroke="#e8f0f8" stroke-width="3" fill="none"/></svg></div>
    <div class="launcher"><div class="dots"><i></i></div>
      <svg width="48" height="48" viewBox="0 0 48 48"><path d="M10 10c9 5 19 4 29-5 3 12-1 26-13 28-8 1-15-3-17-9z" fill="#6b6353" stroke="#3a352c"/><ellipse cx="14" cy="17" rx="3.500" ry="3.800" fill="#f2f2f0"/><ellipse cx="22" cy="17" rx="4.300" ry="4.800" fill="#f2f2f0"/><circle cx="14" cy="17.500" r="2" fill="#111"/><circle cx="22" cy="17.500" r="2.500" fill="#111"/><ellipse cx="5.500" cy="20" rx="5" ry="6" fill="#16181a" stroke="#555"/><circle cx="4.500" cy="18.500" r="1.500" fill="#cfd6dc"/><path d="M27 25l10 4" stroke="#e58a2a" stroke-width="2.400"/><path d="M36 28.500l5 3" stroke="#ccc" stroke-width="3.500"/><path d="M40 31c4-1 6 2 7 10-5 0-8-4-7-10z" fill="#0c0c0c"/></svg></div>
    <div class="apps"><i></i><i></i><i></i><i></i><i></i><i></i><i></i><i></i><i></i></div>
  </nav>

  <main class="window">
    <div class="titlebar"><span class="title">Kenya%20charting%20ideas.docx_1.odt - LibreOffice Writer</span>
      <svg width="58" height="18" viewBox="0 0 58 18"><g stroke="#33312d"><circle cx="9" cy="9" r="8" fill="#807e77"/><circle cx="29" cy="9" r="8" fill="#807e77"/><circle cx="49" cy="9" r="8" fill="#ee5f33"/></g><path d="M5 9h8M25.500 6.500h7v5h-7zM46.500 6.500l5 5M51.500 6.500l-5 5" fill="none" stroke="#33312d" stroke-width="1.200"/></svg></div>
    <div class="menubar"><div class="menus"><span class="m1">File</span><span class="m2">Edit</span><span class="m3">View</span><span class="m4">Insert</span><span class="m5">Format</span><span class="m6">Styles</span><span class="m7">Table</span><span class="m8">Form</span><span class="m9">Tools</span><span class="m10">Window</span><span>Help</span></div><div class="closedoc"><svg width="8" height="8" viewBox="0 0 8 8"><path d="M1 1l6 6M7 1L1 7" stroke="#4c4c4c" stroke-width="1.500"/></svg></div></div>

    <div class="toolbar standard"><i class="grip"></i>
      <svg class="tool"><use href="#new"/></svg><i class="drop"></i><svg class="tool"><use href="#open"/></svg><i class="drop"></i><svg class="tool"><use href="#save"/></svg><i class="drop"></i><i class="sep after"></i>
      <svg class="tool"><use href="#pdf"/></svg><svg class="tool"><use href="#print"/></svg><svg class="tool"><use href="#preview"/></svg><i class="sep"></i>
      <svg class="tool"><use href="#cut"/></svg><svg class="tool"><use href="#copy"/></svg><svg class="tool"><use href="#paste"/></svg><i class="drop"></i><i class="sep after"></i>
      <svg class="tool"><use href="#brush"/></svg><i class="sep"></i>
      <svg class="tool"><use href="#undo"/></svg><i class="drop"></i><svg class="tool"><use href="#redo"/></svg><i class="drop off"></i><i class="sep after"></i>
      <svg class="tool"><use href="#find"/></svg><svg class="tool"><use href="#spell"/></svg><svg class="tool"><use href="#pilcrow"/></svg><i class="sep"></i>
      <svg class="tool"><use href="#table"/></svg><i class="drop"></i><svg class="tool"><use href="#image"/></svg><svg class="tool"><use href="#chart"/></svg><svg class="tool"><use href="#textbox"/></svg><i class="sep"></i>
      <svg class="tool"><use href="#pagebreak"/></svg><svg class="tool"><use href="#field"/></svg><i class="drop wide"></i><svg class="tool"><use href="#omega"/></svg><i class="sep"></i>
      <svg class="tool"><use href="#link"/></svg><svg class="tool"><use href="#footnote"/></svg><svg class="tool"><use href="#endnote"/></svg><svg class="tool"><use href="#bookmark"/></svg><svg class="tool"><use href="#crossref"/></svg><i class="sep"></i>
      <svg class="tool"><use href="#comment"/></svg><svg class="tool"><use href="#track"/></svg><i class="sep"></i>
      <svg class="tool"><use href="#line"/></svg><svg class="tool"><use href="#diamond"/></svg><i class="drop wide"></i><svg class="tool"><use href="#draw"/></svg>
    </div>

    <div class="toolbar format"><i class="grip"></i>
      <div class="combo c-style"><span>Default Style</span><b></b></div>
      <svg class="tool"><use href="#refresh"/></svg><svg class="tool"><use href="#newstyle"/></svg><i class="sep"></i>
      <div class="combo c-font"><span class="it">Arial</span><b></b></div><div class="combo c-size"><span>11</span><b></b></div><i class="sep"></i>
      <svg class="tool"><use href="#bold"/></svg><svg class="tool"><use href="#italic"/></svg><svg class="tool"><use href="#under"/></svg><svg class="tool"><use href="#strike"/></svg><i class="sep"></i>
      <svg class="tool"><use href="#super"/></svg><svg class="tool"><use href="#sub"/></svg><i class="sep"></i>
      <svg class="tool"><use href="#clear"/></svg><i class="sep"></i>
      <svg class="tool"><use href="#fcolor"/></svg><i class="drop"></i><svg class="tool"><use href="#hilite"/></svg><i class="drop"></i><i class="sep after"></i>
      <svg class="tool"><use href="#bullets"/></svg><i class="drop"></i><svg class="tool"><use href="#numbers"/></svg><i class="drop"></i><i class="sep after"></i>
      <svg class="tool pressed"><use href="#al"/></svg><svg class="tool"><use href="#ac"/></svg><svg class="tool"><use href="#ar"/></svg><svg class="tool"><use href="#aj"/></svg><i class="sep"></i>
      <svg class="tool"><use href="#spacing"/></svg><i class="drop"></i><svg class="tool"><use href="#pinc"/></svg><svg class="tool"><use href="#pdec"/></svg><i class="sep"></i>
      <svg class="tool"><use href="#iinc"/></svg><svg class="tool"><use href="#idec"/></svg>
    </div>

    <div class="workspace">
      <section class="editor">
        <svg class="ruler" width="2096" height="24" viewBox="67 157 2096 24">
          <path d="M76.500 165v6h6" fill="none" stroke="#8f8d89" stroke-width="2"/>
          <path d="M295.500 161.500h191.500v13h-191.500z" fill="#efeeec" stroke="#a9a7a4"/>
          <path d="M487 161h1248v14H487z" fill="#fff"/>
          <path d="M1735.500 161.500h191v13h-191z" fill="#efeeec" stroke="#a9a7a4"/>
          <path d="M296 162h1627v12H296z" fill="url(#ticks)"/>
          <g class="ruler-num"><text x="679" y="172">1</text><text x="871" y="172">2</text><text x="1063" y="172">3</text><text x="1255" y="172">4</text><text x="1447" y="172">5</text><text x="1639" y="172">6</text><text x="1831" y="172">7</text></g>
          <path d="M677 175.500h5m-2.500 0v-3M773 175.500h5m-2.500 0v-3M869 175.500h5m-2.500 0v-3M965 175.500h5m-2.500 0v-3M1061 175.500h5m-2.500 0v-3M1157 175.500h5m-2.500 0v-3M1253 175.500h5m-2.500 0v-3M1349 175.500h5m-2.500 0v-3M1445 175.500h5m-2.500 0v-3M1541 175.500h5m-2.500 0v-3M1637 175.500h5m-2.500 0v-3" fill="none" stroke="#8f8d89"/>
          <path d="M579.500 160.500h8v3l-4 4.500 4 4.500v4h-8v-4l4-4.500-4-4.500zM1731.500 176.500v-3l4-4 4 4v3z" fill="#f2f1f0" stroke="#8f8d89"/>
        </svg>
        <div class="view">
          <div class="page page-end"></div>
          <div class="page page-slice">
            <div class="corners"><i class="cl"></i><i class="cr"></i></div>
            <svg class="rowline" width="1155" height="6" viewBox="0 0 1155 6"><path d="M0 2.500h1155" stroke="#000" stroke-width="2"/><path d="M1.500 0v6M109.500 0v6M460.500 0v6M691.500 0v6M922 0v6M1153 0v6" stroke="#000" stroke-width="3"/></svg>
          </div>
          <div class="page page-body">
            <div class="corners"><i class="cl"></i><i class="cr"></i></div>
            <p class="caption">APGAR SCORING [put this on the page so nurses can refer to it]</p>
            <table class="apgar">
              <colgroup><col class="k1"><col class="k2"><col class="k3"><col class="k4"><col class="k5"></colgroup>
              <tr class="r3"><td>A</td><td>Activity<br>(muscle tone)</td><td>0<br>absent</td><td>1<br>Flexed<br>arms/legs</td><td>2<br>active</td></tr>
              <tr class="r2"><td>P</td><td>Pulse</td><td>0<br>absent</td><td>1<br>Below 100 bpm</td><td>Over 100 bpm</td></tr>
              <tr class="r4"><td>G</td><td>Grimace (reflex<br>irritability)</td><td>0<br>floppy</td><td>1<br>Minimal<br>response to<br>stimulation</td><td>2<br>Prompt<br>response to<br>stimulation</td></tr>
              <tr class="r3"><td>A</td><td>Appearance (skin color)</td><td>0<br>Blue, pale</td><td>1<br>Pink body, blue<br>extremities</td><td>2<br>pink</td></tr>
              <tr class="r3 last"><td>R</td><td>Respiration</td><td>0<br>absent</td><td>1<br>Slow and<br>irregular</td><td>2<br>Vigorous cry</td></tr>
            </table>
            <p class="note">(this is a different chart form)</p>
            <p class="heading">Newborn Assessment</p>
          </div>
        </div>
        <div class="thumb"></div>
        <div class="tooltip">Select table column</div>
      </section>

      <aside class="sidebar">
        <div class="splitter"><i></i></div>
        <div class="panel">
          <div class="panel-title"><span>Properties</span><svg width="9" height="9" viewBox="0 0 9 9"><path d="M1 1l7 7M8 1L1 8" stroke="#3c3b37" stroke-width="2.200"/></svg></div>
          <div class="sec"><i class="minus"></i><span>Style</span></div>
          <div class="row h46"><div class="combo s-style"><span>Default Style</span><b></b></div><div class="right"><svg class="st lg"><use href="#refresh"/></svg><svg class="st lg"><use href="#newstyle"/></svg></div></div>
          <div class="sec"><i class="minus"></i><span>Character</span><svg class="more"><use href="#more"/></svg></div>
          <div class="row h46"><div class="combo s-font"><span class="it">Arial</span><b></b></div><div class="combo s-size"><span>11</span><b></b></div></div>
          <div class="row h42"><svg class="st lg"><use href="#bold"/></svg><svg class="st lg"><use href="#italic"/></svg><svg class="st lg"><use href="#under"/></svg><i class="drop sd"></i><svg class="st lg"><use href="#strike"/></svg><svg class="st lg"><use href="#shadow"/></svg><div class="right"><svg class="st md"><use href="#grow"/></svg><svg class="st md"><use href="#shrink"/></svg></div></div>
          <div class="row h48"><svg class="st md"><use href="#fcolor"/></svg><i class="drop sd"></i><svg class="st md"><use href="#hilite"/></svg><i class="drop sd"></i><div class="right"><svg class="st"><use href="#skern"/></svg><i class="drop sd"></i><i class="gap"></i><svg class="st md"><use href="#super"/></svg><svg class="st md"><use href="#sub"/></svg></div></div>
          <div class="sec"><i class="minus"></i><span>Paragraph</span><svg class="more"><use href="#more"/></svg></div>
          <div class="row h46"><svg class="st pressed"><use href="#sal"/></svg><svg class="st"><use href="#sac"/></svg><svg class="st"><use href="#sar"/></svg><svg class="st"><use href="#saj"/></svg></div>
          <div class="row h30 lists"><svg class="st"><use href="#sbul"/></svg><i class="drop sd"></i><svg class="st"><use href="#snum"/></svg><i class="drop sd"></i><div class="right"><svg class="st"><use href="#sback"/></svg><i class="swatch"></i><i class="drop sd"></i></div></div>
          <hr class="rule">
          <div class="cols">
            <div class="col">
              <div class="lab">Spacing:</div>
              <div class="row h30"><svg class="st"><use href="#sinc"/></svg><svg class="st"><use href="#sdec"/></svg></div>
              <div class="field"><svg class="st"><use href="#sabove"/></svg><div class="spin"><span>0.00 "</span><b>−</b><b>+</b></div></div>
              <div class="field"><svg class="st"><use href="#sbelow"/></svg><div class="spin"><span>0.00 "</span><b>−</b><b>+</b></div></div>
              <div class="field"><svg class="st"><use href="#sline"/></svg><i class="drop sd"></i></div>
            </div>
            <div class="col">
              <div class="lab">Indent:</div>
              <div class="row h30"><svg class="st"><use href="#siin"/></svg><svg class="st"><use href="#side"/></svg><svg class="st"><use href="#shang"/></svg></div>
              <div class="field"><svg class="st"><use href="#sleft"/></svg><div class="spin"><span>0.50 "</span><b>−</b><b>+</b></div></div>
              <div class="field"><svg class="st"><use href="#sright"/></svg><div class="spin"><span>0.00 "</span><b>−</b><b>+</b></div></div>
              <div class="field"><svg class="st"><use href="#sfirst"/></svg><div class="spin"><span>0.00 "</span><b>−</b><b>+</b></div></div>
            </div>
          </div>
        </div>
        <div class="tabs">
          <div class="tabmenu"><svg width="12" height="10" viewBox="0 0 12 10"><path d="M1 1h7M1 3.500h7M1 6h5" stroke="#44566e" stroke-width="1.200"/><path d="M5.500 6h6l-3 4z" fill="#223"/></svg></div>
          <div class="tab sel"><svg width="24" height="24" viewBox="0 0 24 24"><path d="M5 2.500L8 6 6.500 8 3 5.500C1.500 9 5 12 8.500 10.500l6 6C13 20 16 23 19.500 21.500L17 19l1.500-2 3.500 2C23 15 19.500 12.500 16 14l-5.500-6C12 4.500 9 1 5 2.500z" fill="#eee" stroke="#8b8b89" stroke-width="1.200"/></svg></div>
          <div class="tab"><svg width="20" height="24" viewBox="0 0 20 24"><path d="M1.500 2h12l5 5v14.500h-17z" fill="#f8f8f7" stroke="#9b9b99" stroke-width="1.200"/><path d="M13 2v5h5" fill="#ddd" stroke="#9b9b99"/></svg></div>
          <div class="tab"><svg width="24" height="26" viewBox="0 0 24 26"><path d="M5 2h18v5h-2l-1-2h-4v15h-4V5H8L7 7H5z" fill="#6a6e6c" stroke="#444"/><path d="M1 7v17h20z" fill="#8bd066" stroke="#3b9a2a" stroke-width="1.400"/><path d="M5 15v6h7z" fill="#e8f5e0" stroke="#3b9a2a"/></svg></div>
          <div class="tab"><svg class="up" width="24" height="22" viewBox="0 0 24 22"><path d="M8 5l4-4 4 4" fill="none" stroke="#777" stroke-width="1.300"/><rect x="1.500" y="5" width="21" height="15" rx="1.500" fill="#c27d1a" stroke="#7c4a06" stroke-width="1.500"/><path d="M4.500 8h15v9h-15z" fill="url(#gSun)"/><path d="M13 17v-4l-3-3M13 13l4-4" fill="none" stroke="#251a10" stroke-width="1.200"/></svg></div>
          <div class="tab"><svg width="24" height="24" viewBox="0 0 24 24"><circle cx="12" cy="12" r="9.800" fill="#fafafa" stroke="#8b8b89" stroke-width="2.600"/><path d="M6 6l7.500 4.500-3 3z" fill="#e23a3a"/><path d="M18 18l-4.500-7.500-3 3z" fill="#3c6cb0"/></svg></div>
        </div>
      </aside>
    </div>

    <footer class="status">
      <div class="f1">Page 2 of 4</div><div class="f2">703 words, 4,140 characters</div><div class="f3">Default Style</div><div class="f4">{en}</div><div class="f5"></div>
      <div class="f6"><svg width="14" height="14" viewBox="0 0 14 14"><path d="M0 3h9v8H0z" fill="#8d8b87"/><path d="M9 .5h4M11 .5v13M9 13.500h4" stroke="#8d8b87"/></svg></div>
      <div class="f7"><svg width="14" height="14" viewBox="0 0 14 14"><path d="M9 1.500H1.500v11H9" fill="none" stroke="#8d8b87" stroke-width="1.300"/><path d="M10 3.500v6M7.500 5l5 3M12.500 5l-5 3" stroke="#c8202a" stroke-width="1.400"/></svg></div>
      <div class="f8"></div><div class="f9"></div>
      <div class="f10"><svg width="58" height="12" viewBox="0 0 58 12"><g fill="none" stroke="#8d8b87" stroke-width="1.200"><path d="M1 1h4.500L8 3.500v7.500H1z" stroke="#3c3b37" stroke-width="1.500"/><path d="M16 1h4l2.500 2.500v7.500H16zM26 1h4l2.500 2.500v7.500H26zM40 3.500L42.500 1H47v10h-7zM47 1h4.500L54 3.500v7.500h-7z"/></g></svg></div>
      <div class="f11"><svg width="130" height="14" viewBox="0 0 130 14"><path d="M3 7h8" stroke="#7c7a76" stroke-width="2"/><path d="M17 7h97" stroke="#b3b1ad" stroke-width="2"/><path d="M65.500 1v12" stroke="#b3b1ad" stroke-width="1.500"/><circle cx="75" cy="7" r="4" fill="#fff" stroke="#8d8b87" stroke-width="1.400"/><path d="M120 7h8M124 3v8" stroke="#7c7a76" stroke-width="2"/></svg></div>
      <div class="f12">200%</div>
    </footer>
  </main>
</div>
</body>
</html>
```
FILE: styles.css
```css
* { box-sizing: border-box; }
html, body { margin: 0; width: 2560px; height: 1440px; overflow: hidden; }
body { display: flex; flex-direction: column; font: 14px/18px "Open Sans", "Noto Sans", sans-serif; color: #4c4c4c; background: #f2f1f0; }
i { font-style: normal; display: block; }
p { margin: 0; }
svg { display: block; flex: none; }
.paints { position: absolute; }
.sprite { display: none; }

.glyph-a { font: bold 27px "DejaVu Serif", serif; fill: #6c706e; stroke: #2e3230; stroke-width: .9px; }
.glyph-md { font-size: 25px; }
.glyph-sm { font-size: 22px; }
.glyph-heavy { stroke-width: 1.700px; }
.glyph-slant { font-style: italic; }
.glyph-soft { fill: #bbb; stroke: #bbb; }
.glyph-blue { fill: #7ea6d8; stroke: #2b5a9e; }
.glyph-b { font: bold 15px "DejaVu Sans", sans-serif; fill: #6f9ad2; stroke: #2b5a9e; stroke-width: .8px; }
.glyph-sans { font: bold 13px "Open Sans", sans-serif; fill: #3d4143; }
.glyph-t { font: bold 22px "Liberation Serif", serif; fill: #444; }
.glyph-omega { font: bold 29px "Liberation Serif", serif; fill: #2f3836; }
.glyph-n { font: bold 12px "Liberation Sans", sans-serif; fill: #2f65b0; }
.glyph-ab { font: bold 8px "Liberation Sans", sans-serif; fill: #222; }
.glyph-help { font: bold 34px "Open Sans", sans-serif; fill: #fff; }
.glyph-amz { font: bold 38px "Open Sans", sans-serif; fill: #1d1d1b; }
.bar { fill: none; stroke: #3b403d; stroke-width: 2.800px; stroke-linecap: round; }
.bar.thin { stroke-width: 2.200px; stroke-linecap: butt; }

.topbar { height: 27px; flex: none; display: grid; grid-template-columns: 1200px auto 1fr; align-items: center; padding: 0 13px 0 12px; background: linear-gradient(#5a564e, #3f3e39); color: #dfdbd2; font-weight: 600; letter-spacing: .35px; font-size: 14.500px; }
.topbar-left { display: flex; align-items: center; }
.activities { width: 88px; }
.appname { margin: 0 4px 0 6px; width: 133px; white-space: nowrap; }
.clock { width: 68px; white-space: nowrap; margin-left: 68px; }
.topbar-right { display: flex; justify-content: flex-end; align-items: center; gap: 12px; }
.caret { width: 0; height: 0; border: 5px solid transparent; border-top-color: #dfdbd2; border-bottom: 0; }

.desktop { flex: 1; display: flex; min-height: 0; }
.dock { width: 67px; flex: none; display: flex; flex-direction: column; background: linear-gradient(#533739, #4a3338 45%, #44323a 70%, #433237 92%, #3e3335 93%); }
.launcher { height: 64px; flex: none; display: flex; align-items: center; justify-content: center; position: relative; padding-right: 1px; }
.launcher.active::before { content: ""; position: absolute; inset: 1px 3px 1px 2px; background: #6a5256; border-radius: 3px; }
.launcher svg { position: relative; overflow: visible; }
.dots { position: absolute; left: 2px; top: 0; bottom: 0; display: flex; flex-direction: column; justify-content: center; gap: 2px; z-index: 1; }
.dots i { width: 6px; height: 6px; border-radius: 50%; background: #e95420; }
.apps { margin: auto 0 17px 18px; display: grid; grid-template-columns: repeat(3, 6px); gap: 6px; }
.apps i { width: 6px; height: 6px; border-radius: 50%; background: #f2f1f0; }

.window { flex: 1; min-width: 0; display: flex; flex-direction: column; }
.titlebar { height: 28px; flex: none; display: flex; align-items: center; justify-content: space-between; padding-right: 4px; background: linear-gradient(#3a3935, #4e4a43); color: #dfdbd2; font-weight: 700; }
.title { margin-left: 1035px; width: 440px; white-space: nowrap; letter-spacing: .180px; }
.menubar { height: 24px; flex: none; display: flex; justify-content: space-between; background: #504c44; color: #dfdbd2; }
.menus { display: flex; align-items: center; padding: 1px 0 0 6.500px; letter-spacing: -.1px; }
.m1 { width: 36px; } .m2 { width: 39px; } .m3 { width: 45px; } .m4 { width: 51px; } .m5 { width: 62px; }
.m6 { width: 52px; } .m7 { width: 48px; } .m8 { width: 48px; } .m9 { width: 48px; } .m10 { width: 67px; }
.closedoc { width: 36px; background: #f2f1f0; display: grid; place-items: center; }

.toolbar { display: flex; align-items: center; flex: none; }
.standard { height: 38px; padding-left: 3px; }
.format { height: 40px; padding-left: 3px; }
.grip { width: 3px; height: 22px; margin-right: 4px; background: repeating-linear-gradient(#aaa8a5 0 3px, transparent 3px 4px); }
.tool { width: 33px; height: 28px; }
.tool.pressed { height: 33px; border: 1px solid #a5a3a0; border-radius: 5px; background: linear-gradient(#e3e2e1, #f0efee); width: 31px; padding: 2px 0; margin: 0 1px; }
.drop { width: 10px; height: 4px; flex: none; background: #111; clip-path: polygon(20% 0, 90% 0, 55% 100%); }
.drop.off { opacity: .25; }
.drop.wide { margin-right: 1px; }
.sep { width: 8px; height: 38px; flex: none; background: linear-gradient(#dcdad8, #dcdad8) 3px 0 / 1px 100% no-repeat; }
.sep.after { margin-left: 2px; }

.combo { height: 27px; flex: none; display: flex; border: 1px solid #9e9c99; border-radius: 4px; background: linear-gradient(#f3f3f2, #fff 60%); overflow: hidden; letter-spacing: .350px; }
.combo span { flex: 1; padding: 4px 0 0 7px; white-space: nowrap; }
.combo b { width: 27px; border-left: 1px solid #b8b6b3; background: linear-gradient(#fbfbfb, #ecebea); display: grid; place-items: center; }
.combo b::after { content: ""; border: 5px solid transparent; border-top: 6px solid #111; border-bottom: 0; }
.it { font-style: italic; }
.c-style { width: 142px; margin: 0 1px 0 3px; }
.c-font { width: 142px; margin: 0 9px 0 2px; }
.c-size { width: 72px; }

.workspace { flex: 1; min-height: 0; display: flex; }
.editor { width: 2096px; flex: none; position: relative; display: flex; flex-direction: column; }
.ruler-num { font: 13px "Open Sans", sans-serif; fill: #8f8d89; text-anchor: middle; }
.view { flex: 1; min-height: 0; overflow: hidden; display: flex; flex-direction: column; padding-left: 226px; }
.page { width: 1636px; flex: none; background: #fff; border: solid #b9b8b6; border-width: 0 1px; box-shadow: 0 0 5px rgba(0, 0, 0, .35); position: relative; }
.page-end { height: 121px; z-index: 2; box-shadow: 0 3px 2px -1px #9b9b9b, 0 4px 6px rgba(0, 0, 0, .4); }
.page-slice { height: 35px; padding-top: 2px; }
.page-body { flex: 1; border-top: 1px solid #b5b4b2; padding-top: 166px; }
.corners { display: flex; justify-content: space-between; padding: 0 165px 0 167px; }
.corners i { width: 27px; height: 27px; border: solid #c4c3c2; border-width: 0 1px 1px 0; }
.corners .cr { border-width: 0 0 1px 1px; width: 28px; }
.rowline { margin: 0 0 0 286px; }

.page-body, .apgar { font: 29.330px/32px "Liberation Sans", Arial, sans-serif; color: #000; }
.caption { margin: -1px 0 0 290px; height: 32px; white-space: nowrap; }
.apgar { margin: 6px 0 0 286px; width: 1154px; table-layout: fixed; border-collapse: collapse; }
.apgar td { border: solid #000; border-width: 2px 3px; padding: 13px 0 0 12px; vertical-align: top; white-space: nowrap; }
.apgar td:nth-child(3), .apgar td:nth-child(4) { padding-left: 13px; }
.k1 { width: 108px; } .k2 { width: 351px; } .k3 { width: 231px; } .k4 { width: 231px; } .k5 { width: 231px; }
.r2 { height: 94px; } .r3 { height: 125px; } .r4 { height: 157px; } .last { height: 126px; }
.note { margin: 110px 0 0 194px; height: 36px; }
.heading { margin-left: 194px; font-weight: bold; }

.thumb { position: absolute; right: 0; top: 612px; width: 7px; height: 180px; background: #f28e69; }
.tooltip { position: absolute; left: 1930px; top: 524px; width: 141px; height: 27px; padding: 4px 0 0 5px; border-radius: 4px; background: linear-gradient(#4a4a4a, #202020 80%); color: #fff; white-space: nowrap; letter-spacing: .250px; box-shadow: 0 0 0 1px #fff, 0 5px 12px rgba(0, 0, 0, .35); }

.sidebar { flex: 1; display: flex; border-top: 1px solid #a9a7a4; border-bottom: 1px solid #a9a7a4; margin-bottom: 1px; }
.splitter { width: 7px; border: solid #a9a7a4; border-width: 0 1px; background: #f9f9f8; display: flex; align-items: flex-start; }
.splitter i { flex: none; width: 7px; height: 73px; margin: 593px -1px 0; background: #93918b; display: grid; place-items: center; }
.splitter i::after { content: ""; border: 4px solid transparent; border-left: 5px solid #f2f1f0; border-right: 0; }
.panel { width: 345px; margin: 3px 0 2px 5px; border: 1px solid #dddbd9; display: flex; flex-direction: column; }
.panel-title { height: 26px; display: flex; justify-content: space-between; align-items: center; padding: 2px 5px 0 8px; font-weight: 700; color: #3c3b37; letter-spacing: .2px; }
.sec { height: 26px; display: flex; align-items: center; padding: 3px 5px 0 4px; background: linear-gradient(#dfdedd, #f2f1f0); font-weight: 700; letter-spacing: .1px; }
.sec span { padding-top: 1px; }
.minus { width: 9px; height: 9px; margin: -3px 5px 0 0; border: 1px solid #55606a; background: linear-gradient(#333, #333) center / 5px 1px no-repeat, #e6eef5; }
.more { width: 12px; height: 12px; margin: 3px 0 0 auto; }
.row { display: flex; align-items: center; padding: 0 7px 0 4px; }
.col .row { padding: 0; }
.h30 { height: 30px; } .h42 { height: 42px; padding-top: 2px; } .h46 { height: 46px; } .h48 { height: 48px; }
.lists { margin-top: 1px; }
.right { margin-left: auto; display: flex; align-items: center; }
.st { width: 25px; height: 16px; }
.st.lg { height: 24px; }
.st.md { height: 20px; }
.st.pressed { height: 25px; width: 23px; margin: 0 1px; padding: 3px; border: 1px solid #a5a3a0; border-radius: 4px; background: linear-gradient(#e3e2e1, #f0efee); }
.sd { width: 11px; margin: 0 .500px 0 0; }
.gap { width: 12px; }
.s-style { width: 274px; margin-left: 1px; }
.s-font { width: 253px; margin: 0 8px 0 1px; }
.s-size { width: 69px; }
.swatch { width: 65px; height: 12px; border: 1px solid #000; margin: 0 7px 0 -2px; }
.rule { width: 332px; height: 1px; margin: 7px 0 0 5px; border: 0; background: #8f8d89; flex: none; }
.cols { display: flex; padding-left: 4px; }
.col { width: 169px; }
.lab { height: 30px; padding: 6px 0 0 1px; font-size: 14.500px; }
.col .row { margin-bottom: 5px; }
.field { height: 39px; display: flex; align-items: center; }
.spin { width: 130px; height: 31px; margin-left: 2.500px; display: flex; border: 1px solid #a5a3a0; border-radius: 5px; }
.spin span { flex: 1; padding: 6px 0 0 .500px; letter-spacing: .1px; }
.spin b { width: 29px; font: 22px/28px "DejaVu Sans", sans-serif; text-align: center; color: #3c3b37; }
.spin b:last-child { border-left: 1px solid #c9c7c4; }
.tabs { flex: 1; display: flex; flex-direction: column; align-items: center; }
.tabmenu { height: 39px; width: 24px; border-bottom: 1px solid #dddbd9; display: grid; place-items: center; flex: none; }
.tab { height: 32px; width: 32px; margin: 3px 0 .300px; display: grid; place-items: center; flex: none; }
.tab .up { margin-bottom: 5px; }
.tab.sel { border: 1px solid #b3b1ae; border-radius: 4px; }

.status { height: 21px; flex: none; display: flex; border-top: 1px solid #a9a7a4; font-size: 12px; letter-spacing: -.1px; }
.status div { display: flex; align-items: center; border-left: 1px solid #8f8d89; margin: 2px 0 0; padding-left: 8px; }
.status .f1 { width: 404px; border-left: 0; padding-left: 10px; }
.f2 { width: 521px; } .f3 { width: 419px; } .f4 { width: 369px; } .f5 { width: 69px; } .f6 { width: 29px; } .f7 { width: 28px; } .f8 { width: 30px; } .f9 { width: 356px; } .f10 { width: 76px; } .f11 { width: 143px; } .f12 { width: 49px; }
.status .f2 { padding-left: 7px; letter-spacing: -.050px; }
.status .f4 { justify-content: center; padding: 0 0 0 2px; }
.status .f10 { padding-left: 12px; }
.status .f11 { padding-left: 6px; }
.status .f12 { padding-left: 7px; }
```
